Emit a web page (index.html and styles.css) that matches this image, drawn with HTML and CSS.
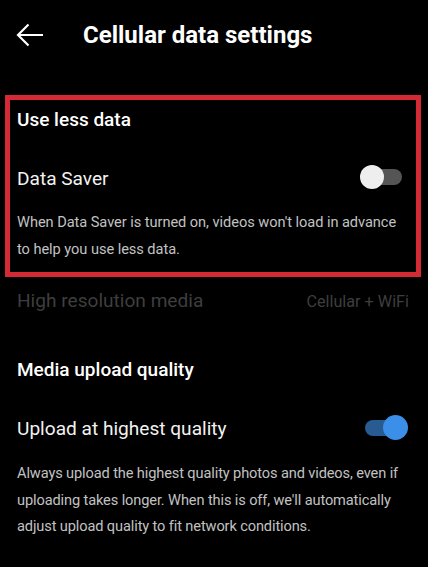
FILE: index.html
```html
<!DOCTYPE html>
<html lang="en">
<head>
<meta charset="utf-8">
<title>Cellular data settings</title>
<link rel="stylesheet" href="styles.css">
</head>
<body>
<div class="screen">
  <header class="topbar">
    <svg class="back" width="28" height="24" viewBox="0 0 28 24" aria-hidden="true">
      <path d="M27 12H2M12.5 1.5L2 12l10.5 10.5" fill="none" stroke="#fff" stroke-width="2.2" stroke-linecap="butt" stroke-linejoin="miter"/>
    </svg>
    <h1 class="title">Cellular data settings</h1>
  </header>

  <section class="highlight">
    <h2 class="section-title">Use less data</h2>
    <div class="row row-saver">
      <span class="row-label">Data Saver</span>
      <span class="toggle toggle-off"><span class="knob"></span></span>
    </div>
    <p class="desc desc-saver">When Data Saver is turned on, videos won't load in advance to help you use less data.</p>
  </section>

  <div class="row row-dim">
    <span class="row-label">High resolution media</span>
    <span class="row-value">Cellular + WiFi</span>
  </div>

  <h2 class="section-title title-upload">Media upload quality</h2>
  <div class="row row-upload">
    <span class="row-label">Upload at highest quality</span>
    <span class="toggle toggle-on"><span class="knob"></span></span>
  </div>
  <p class="desc desc-upload">Always upload the highest quality photos and videos, even if uploading takes longer. When this is off, we'll automatically adjust upload quality to fit network conditions.</p>
</div>
</body>
</html>
```

FILE: styles.css
```css
* { box-sizing: border-box; }
html, body {
  margin: 0;
  padding: 0;
  background: #000;
}
body {
  font-family: Roboto, "Noto Sans", "Liberation Sans", sans-serif;
  color: #fff;
  width: 428px;
  height: 567px;
  overflow: hidden;
}
.screen {
  display: flex;
  flex-direction: column;
}
.topbar {
  display: flex;
  align-items: center;
  height: 70px;
  padding: 0 0 0 16px;
  gap: 39px;
}
.back {
  display: block;
  flex: none;
}
.title {
  margin: 0;
  font-size: 24px;
  font-weight: 700;
  line-height: 28px;
  color: #fff;
}
.highlight {
  margin: 25px 7px 0 5px;
  border: 5px solid #d42a35;
  padding: 8px 11px 9px 7px;
}
.section-title {
  margin: 0;
  font-size: 19px;
  font-weight: 500;
  line-height: 24px;
  color: #fff;
}
.row {
  display: flex;
  align-items: center;
  justify-content: space-between;
  height: 24px;
}
.row-label {
  font-size: 19.1px;
  line-height: 24px;
  font-weight: 400;
  color: #f2f2f2;
}
.row-saver {
  margin-top: 35px;
}
.desc {
  margin: 0;
  color: #c2c2c2;
}
.desc-saver {
  margin-top: 18px;
  font-size: 14.6px;
  line-height: 27px;
  letter-spacing: -0.05px;
}
.toggle {
  position: relative;
  display: block;
  flex: none;
  width: 43px;
  height: 24px;
}
.toggle::before {
  content: "";
  position: absolute;
  left: 8px;
  right: 1px;
  top: 4px;
  height: 16px;
  border-radius: 8px;
  background: #555;
}
.toggle .knob {
  position: absolute;
  top: 0;
  left: 0;
  width: 24px;
  height: 24px;
  border-radius: 50%;
  background: #eee;
}
.toggle-on::before {
  left: 0;
  right: 10px;
  background: #275b92;
}
.toggle-on .knob {
  left: auto;
  right: 0;
  width: 25px;
  height: 25px;
  top: -1px;
  background: #3b8fe8;
}
.row-saver .toggle { margin-right: 2px; margin-top: -4px; }
.row-dim {
  margin-top: 12px;
  padding: 0 19px 0 17px;
}
.row-dim .row-label {
  color: #3e3e3e;
}
.row-value {
  font-size: 16.2px;
  color: #3e3e3e;
}
.title-upload {
  margin: 45px 0 0 17px;
}
.row-upload {
  margin-top: 35px;
  padding: 0 20px 0 17px;
}
.row-upload .toggle { margin-top: -2px; }
.desc-upload {
  margin-top: 19px;
  padding: 0 20px 0 17px;
  font-size: 14.6px;
  line-height: 26.5px;
  letter-spacing: -0.12px;
}
```
